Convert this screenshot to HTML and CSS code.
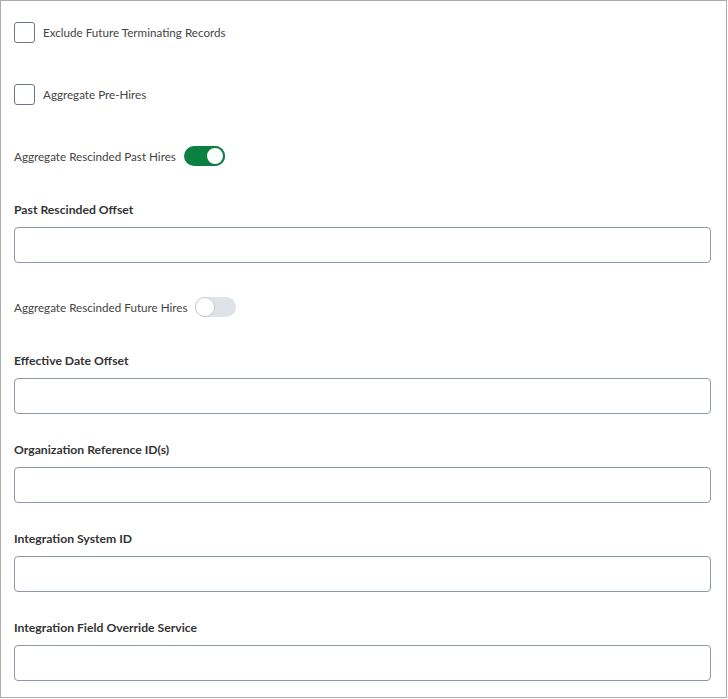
FILE: index.html
```html
<!DOCTYPE html>
<html lang="en">
<head>
  <meta charset="UTF-8" />
  <meta name="viewport" content="width=device-width, initial-scale=1" />
  <title>Integration Settings</title>
  <link rel="stylesheet" href="styles.css">
</head>
<body>
  <div class="panel">
    <label class="check-row first">
      <span class="checkbox"></span>
      <span>Exclude Future Terminating Records</span>
    </label>

    <label class="check-row">
      <span class="checkbox"></span>
      <span>Aggregate Pre-Hires</span>
    </label>

    <div class="toggle-row">
      <span>Aggregate Rescinded Past Hires</span>
      <span class="toggle on"><span class="knob"></span></span>
    </div>

    <div class="field">
      <div class="field-label">Past Rescinded Offset</div>
      <input class="field-input" type="text" />
    </div>

    <div class="toggle-row">
      <span>Aggregate Rescinded Future Hires</span>
      <span class="toggle"><span class="knob"></span></span>
    </div>

    <div class="field">
      <div class="field-label">Effective Date Offset</div>
      <input class="field-input" type="text" />
    </div>

    <div class="field tight">
      <div class="field-label">Organization Reference ID(s)</div>
      <input class="field-input" type="text" />
    </div>

    <div class="field tight">
      <div class="field-label">Integration System ID</div>
      <input class="field-input" type="text" />
    </div>

    <div class="field tight">
      <div class="field-label">Integration Field Override Service</div>
      <input class="field-input" type="text" />
    </div>
  </div>
</body>
</html>
```

FILE: styles.css
```css
body {
  margin: 0;
  padding: 0;
  font-family: Lato, "Open Sans", sans-serif;
  font-size: 11.65px;
  color: #444;
  background: #fff;
}

.panel {
  box-sizing: border-box;
  width: 727px;
  height: 698px;
  border: 1px solid #ababab;
  padding: 0 16px 0 13px;
  overflow: hidden;
}

.check-row {
  display: flex;
  align-items: center;
  gap: 8px;
  height: 21px;
  margin-top: 41px;
}

.check-row.first {
  margin-top: 21px;
}

.checkbox {
  box-sizing: border-box;
  width: 21px;
  height: 21px;
  border: 1px solid #6b7785;
  border-radius: 3px;
  background: #fff;
}

.toggle-row {
  display: flex;
  align-items: center;
  gap: 8px;
  height: 20px;
  margin-top: 41px;
}

.toggle-row + .field {
  margin-top: 36px;
}

.field + .toggle-row {
  margin-top: 34px;
}

.toggle {
  box-sizing: border-box;
  position: relative;
  width: 41px;
  height: 20px;
  border-radius: 10px;
  background: #dfe2e7;
}

.toggle .knob {
  box-sizing: border-box;
  position: absolute;
  top: 0;
  left: 0;
  width: 20px;
  height: 20px;
  border-radius: 50%;
  background: #fff;
  border: 1px solid #c5cad1;
}

.toggle.on {
  background: #0b8043;
}

.toggle.on .knob {
  left: 21px;
  border: 2px solid #0b8043;
}

.field-label {
  font-size: 12.2px;
  font-weight: bold;
  color: #333;
  line-height: 16px;
  margin-bottom: 9px;
}

.field.tight {
  margin-top: 28px;
}

.field-input {
  display: block;
  box-sizing: border-box;
  width: 697px;
  height: 36px;
  margin: 0;
  border: 1px solid #8e99a6;
  border-radius: 4px;
  padding: 0 10px;
  font: inherit;
  background: #fff;
}
```
